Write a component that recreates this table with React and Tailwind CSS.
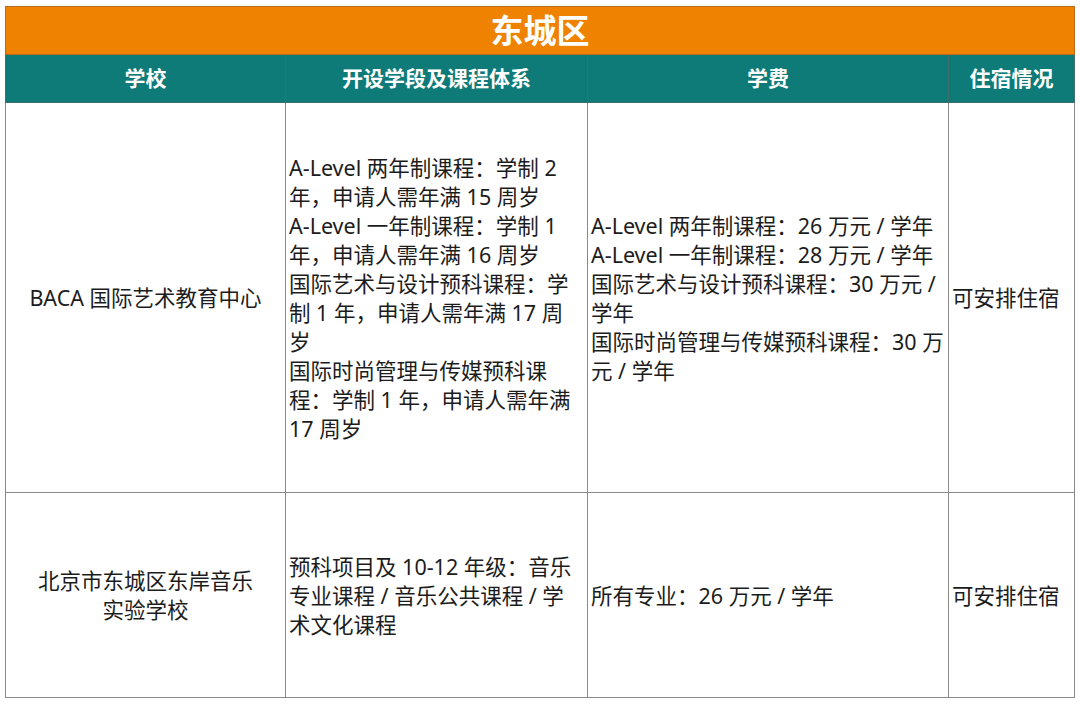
import React from 'react';

const font = { fontFamily: '"Noto Sans", "Noto Sans CJK SC", sans-serif' };

// lines kept as in the source sheet
const rows = [
  {
    school: ['BACA 国际艺术教育中心'],
    courses: [
      'A-Level 两年制课程：学制 2',
      '年，申请人需年满 15 周岁',
      'A-Level 一年制课程：学制 1',
      '年，申请人需年满 16 周岁',
      '国际艺术与设计预科课程：学',
      '制 1 年，申请人需年满 17 周',
      '岁',
      '国际时尚管理与传媒预科课',
      '程：学制 1 年，申请人需年满',
      '17 周岁',
    ],
    fees: [
      'A-Level 两年制课程：26 万元 / 学年',
      'A-Level 一年制课程：28 万元 / 学年',
      '国际艺术与设计预科课程：30 万元 /',
      '学年',
      '国际时尚管理与传媒预科课程：30 万',
      '元 / 学年',
    ],
    stay: '可安排住宿',
    h: 'h-[390px]',
  },
  {
    school: ['北京市东城区东岸音乐', '实验学校'],
    courses: ['预科项目及 10-12 年级：音乐', '专业课程 / 音乐公共课程 / 学', '术文化课程'],
    fees: ['所有专业：26 万元 / 学年'],
    stay: '可安排住宿',
    h: 'h-[205px]',
  },
];

const Lines = ({ items }) => items.map((c, i) => (
  <div key={i} className="whitespace-nowrap">{c}</div>
));

export default function App() {
  return (
    <div className="w-[1080px] h-[704px] bg-white pt-[6px] pl-[5px] overflow-hidden" style={font}>
      <table className="table-fixed border-collapse w-[1069px] text-[#1c1c1c]">
        <colgroup>
          <col className="w-[280px]" />
          <col className="w-[302px]" />
          <col className="w-[361px]" />
          <col className="w-[126px]" />
        </colgroup>
        <thead>
          <tr className="h-[48px]">
            <th colSpan={4} className="h-[48px] p-0 leading-none bg-[#ef8300] border border-[#b86a1a] text-white text-[33px] font-bold">
              东城区
            </th>
          </tr>
          <tr className="h-[48px] bg-[#0e7b79] text-white text-[21px] font-bold leading-none">
            <th className="h-[48px] p-0 border border-[#3f6f6d]">学校</th>
            <th className="h-[48px] p-0 border border-[#3f6f6d]">开设学段及课程体系</th>
            <th className="h-[48px] p-0 border border-[#3f6f6d]">学费</th>
            <th className="h-[48px] p-0 border border-[#3f6f6d]">住宿情况</th>
          </tr>
        </thead>
        <tbody className="text-[21.5px] leading-[29px]">
          {rows.map((r) => (
            <tr key={r.school[0]} className={r.h}>
              <td className="border border-[#8a8a8a] text-center align-middle">
                <Lines items={r.school} />
              </td>
              <td className="border border-[#8a8a8a] px-[3px] align-middle">
                <Lines items={r.courses} />
              </td>
              <td className="border border-[#8a8a8a] px-[3px] align-middle">
                <Lines items={r.fees} />
              </td>
              <td className="border border-[#8a8a8a] px-[3px] align-middle whitespace-nowrap">{r.stay}</td>
            </tr>
          ))}
        </tbody>
      </table>
    </div>
  );
}
